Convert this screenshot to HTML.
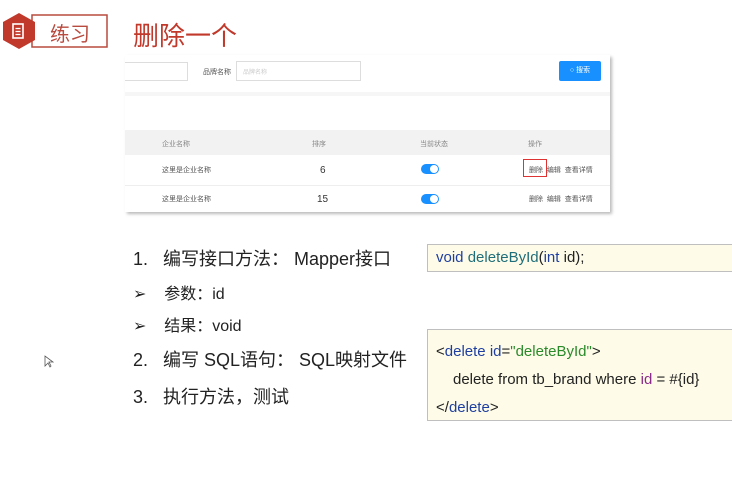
<!DOCTYPE html>
<html><head><meta charset="utf-8"><style>
*{margin:0;padding:0;box-sizing:border-box}
body{width:732px;height:478px;background:#fff;position:relative;overflow:hidden;font-family:"Liberation Sans","Noto Sans CJK SC",sans-serif}
.a{position:absolute;white-space:nowrap}
.s{font-size:7px;color:#555}
.code{position:absolute;left:427px;width:310px;background:#fefce8;border:1px solid #bfbfbf;font-size:15px;color:#222}
.li{position:absolute;font-size:18px;color:#222;white-space:nowrap}
</style></head><body>
<svg class="a" style="left:0;top:12px" width="110" height="40">
<rect x="32" y="3" width="75" height="32" fill="#fff" stroke="#b84a3e" stroke-width="1.5"/>
<polygon points="19,1 35,10 35,28 19,37 3,28 3,10" fill="#c0392b"/>
<rect x="13" y="12" width="10" height="14" fill="none" stroke="#fff" stroke-width="1.6"/>
<line x1="15.5" y1="16.5" x2="20.5" y2="16.5" stroke="#fff" stroke-width="1.3"/>
<line x1="15.5" y1="19.5" x2="20.5" y2="19.5" stroke="#fff" stroke-width="1.3"/>
<line x1="15.5" y1="22.5" x2="20.5" y2="22.5" stroke="#fff" stroke-width="1.3"/>
</svg>
<div class="a" style="left:50px;top:18px;font-size:20px;color:#b84a3e">练习</div>
<div class="a" style="left:133px;top:16px;font-size:26px;color:#c0392b">删除一个</div>

<div class="a" style="left:125px;top:55px;width:485px;height:157px;background:#fff;box-shadow:2px 2px 3px #bbb">
 <div class="a" style="left:0;top:7px;width:63px;height:19px;border:1px solid #ddd;border-left:none"></div>
 <div class="a s" style="left:78px;top:12px">品牌名称</div>
 <div class="a" style="left:111px;top:6px;width:125px;height:20px;border:1px solid #ddd"></div>
 <div class="a" style="left:118px;top:12px;font-size:6px;color:#ccc">品牌名称</div>
 <div class="a" style="left:434px;top:6px;width:42px;height:20px;background:#1890ff;border-radius:2px;color:#fff;font-size:7px;line-height:20px;text-align:center">○ 搜索</div>
 <div class="a" style="left:0;top:37px;width:485px;height:4px;background:#f6f6f6"></div>
 <div class="a" style="left:0;top:75px;width:485px;height:25px;background:#f2f2f2"></div>
 <div class="a s" style="left:37px;top:84px;color:#888">企业名称</div>
 <div class="a s" style="left:187px;top:84px;color:#888">排序</div>
 <div class="a s" style="left:295px;top:84px;color:#888">当前状态</div>
 <div class="a s" style="left:403px;top:84px;color:#888">操作</div>
 <div class="a s" style="left:37px;top:110px">这里是企业名称</div>
 <div class="a" style="left:195px;top:110px;font-size:10px;color:#333">6</div>
 <div class="a" style="left:296px;top:109px;width:18px;height:10px;border-radius:5px;background:#1890ff"><div class="a" style="right:1px;top:1px;width:8px;height:8px;border-radius:4px;background:#fff"></div></div>
 <div class="a" style="left:398px;top:104px;width:24px;height:18px;border:1.5px solid #d33"></div>
 <div class="a s" style="left:404px;top:110px">删除 &nbsp;编辑 &nbsp;查看详情</div>
 <div class="a" style="left:0;top:130px;width:485px;height:1px;background:#eee"></div>
 <div class="a s" style="left:37px;top:139px">这里是企业名称</div>
 <div class="a" style="left:192px;top:139px;font-size:10px;color:#333">15</div>
 <div class="a" style="left:296px;top:139px;width:18px;height:10px;border-radius:5px;background:#1890ff"><div class="a" style="right:1px;top:1px;width:8px;height:8px;border-radius:4px;background:#fff"></div></div>
 <div class="a s" style="left:404px;top:139px">删除 &nbsp;编辑 &nbsp;查看详情</div>
</div>

<div class="li" style="left:133px;top:245px">1.&nbsp;&nbsp; 编写接口方法： Mapper接口</div>
<div class="li" style="left:133px;top:280px;font-size:16px">➢&nbsp;&nbsp;&nbsp; 参数：id</div>
<div class="li" style="left:133px;top:312px;font-size:16px">➢&nbsp;&nbsp;&nbsp; 结果：void</div>
<div class="li" style="left:133px;top:346px">2.&nbsp;&nbsp; 编写 SQL语句： SQL映射文件</div>
<div class="li" style="left:133px;top:383px">3.&nbsp;&nbsp; 执行方法，测试</div>

<div class="code" style="top:244px;height:28px;padding:4px 0 0 8px"><span style="color:#1f3fa0">void</span> <span style="color:#1f6e7a">deleteById</span>(<span style="color:#1f3fa0">int</span> id);</div>
<div class="code" style="top:329px;height:92px;padding:8px 0 0 8px;line-height:28px">
<div>&lt;<span style="color:#1f3fa0">delete</span> <span style="color:#1f3fa0">id</span>=<span style="color:#2a8a2a">"deleteById"</span>&gt;</div>
<div style="padding-left:17px">delete from tb_brand where <span style="color:#8a2a8a">id</span> = #{id}</div>
<div>&lt;/<span style="color:#1f3fa0">delete</span>&gt;</div>
</div>
<svg class="a" style="left:44px;top:355px" width="10" height="14"><path d="M1 1 L1 11 L4 8 L6 12 L7 11 L5 7 L9 7 Z" fill="#fff" stroke="#555" stroke-width="0.8"/></svg>
</body></html>
